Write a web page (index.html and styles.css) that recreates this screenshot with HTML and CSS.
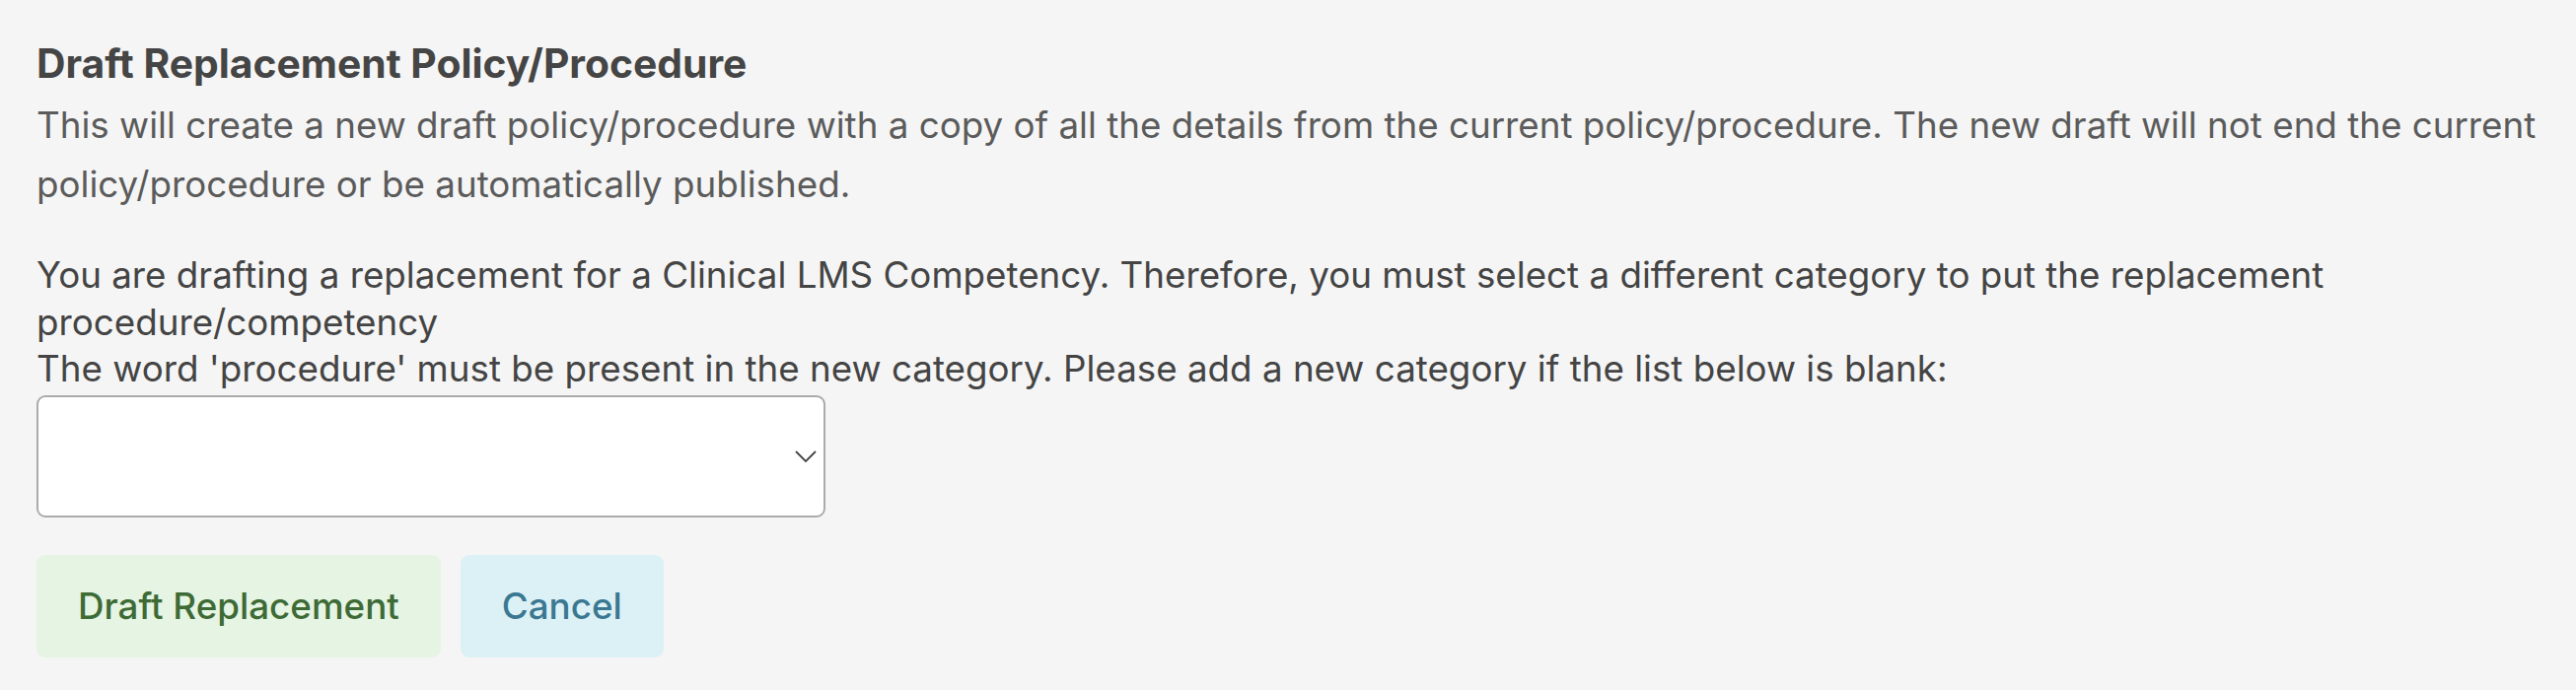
FILE: index.html
```html
<!DOCTYPE html>
<html lang="en">
<head>
<meta charset="utf-8">
<title>Draft Replacement Policy/Procedure</title>
<link rel="stylesheet" href="styles.css">
</head>
<body>
<main class="page">
  <h1 class="title">Draft Replacement Policy/Procedure</h1>
  <p class="intro">This will create a new draft policy/procedure with a copy of all the details from the current policy/procedure. The new draft will not end the current policy/procedure or be automatically published.</p>
  <p class="notice">You are drafting a replacement for a Clinical LMS Competency. Therefore, you must select a different category to put the replacement procedure/competency<br>The word 'procedure' must be present in the new category. Please add a new category if the list below is blank:</p>
  <div class="select-wrap">
    <select class="select" aria-label="Category"></select>
    <svg class="chevron" width="22" height="12" viewBox="0 0 22 12" aria-hidden="true"><path d="M1 1 L11 11 L21 1" fill="none" stroke="#444" stroke-width="1.8"/></svg>
  </div>
  <div class="actions">
    <button class="btn btn-primary" type="button">Draft Replacement</button>
    <button class="btn btn-cancel" type="button">Cancel</button>
  </div>
</main>
</body>
</html>
```
FILE: styles.css
```css
html, body {
  margin: 0;
  padding: 0;
  background: #f5f5f5;
}
body {
  font-family: Inter, "Noto Sans", "Liberation Sans", sans-serif;
  color: #444;
}
.page {
  padding: 40px 20px 0 37px;
}
.title {
  margin: 0;
  font-size: 40.8px;
  line-height: 48px;
  font-weight: 700;
  color: #454545;
}
.intro {
  margin: 9px 0 0;
  font-size: 36.75px;
  line-height: 60px;
  color: #5b5b5b;
}
.notice {
  margin: 38px 0 0;
  font-size: 36.75px;
  line-height: 47.5px;
  color: #444;
}
.select-wrap {
  position: relative;
  width: 800px;
  margin-top: 3px;
}
.select {
  display: block;
  box-sizing: border-box;
  width: 800px;
  height: 124px;
  border: 2px solid #ababab;
  border-radius: 9px;
  background: #fff;
  appearance: none;
  -webkit-appearance: none;
  font-family: inherit;
  font-size: 36px;
}
.chevron {
  position: absolute;
  right: 9px;
  top: 56px;
}
.actions {
  display: flex;
  gap: 20px;
  margin-top: 38px;
}
.btn {
  border: 0;
  border-radius: 9px;
  height: 104px;
  padding: 0 42px;
  font-family: inherit;
  font-size: 36.75px;
  font-weight: 500;
  cursor: pointer;
}
.btn-primary {
  background: #e5f4e3;
  color: #3d6a35;
}
.btn-cancel {
  background: #dcf1f5;
  color: #3a7892;
}
```
